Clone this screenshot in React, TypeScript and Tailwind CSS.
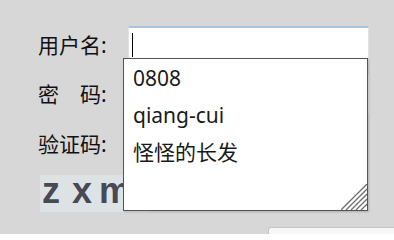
import React from 'react'

const font = {
  fontFamily: '"Noto Sans", "Noto Sans CJK SC", sans-serif',
}

function ResizeGrip() {
  return (
    <svg width="26" height="26" viewBox="0 0 26 26" className="absolute right-0 bottom-0">
      <g stroke="#6f6f6f" strokeWidth="1.3">
        <line x1="26" y1="0" x2="0" y2="26" />
        <line x1="26" y1="5" x2="5" y2="26" />
        <line x1="26" y1="10" x2="10" y2="26" />
        <line x1="26" y1="15" x2="15" y2="26" />
        <line x1="26" y1="20" x2="20" y2="26" />
      </g>
    </svg>
  )
}

export default function App() {
  const suggestions = ['0808', 'qiang-cui', '怪怪的长发']

  return (
    <div
      className="relative w-[394px] h-[234px] overflow-hidden bg-[#d7d7d7] text-[#111]"
      style={font}
    >
      <div className="flex flex-col pl-[38px] pt-[26px]">
        {/* 用户名 */}
        <div className="flex items-center h-[38px]">
          <span className="w-[90px] text-[21px] leading-none">用户名:</span>
          <div className="w-[241px] h-[38px] bg-white border border-[#e2e2e2] border-t-2 border-t-[#a9c4de] flex items-start pt-[5px]">
            <span className="ml-[3px] w-px h-[24px] bg-black" />
          </div>
        </div>

        {/* 密码 */}
        <div className="flex items-center h-[38px] mt-[11px]">
          <span className="w-[90px] text-[21px] leading-none">密　码:</span>
          <div className="w-[241px] h-[38px] bg-white border border-[#e6e6e6]" />
        </div>

        {/* 验证码 */}
        <div className="flex items-center h-[38px] mt-[12px]">
          <span className="w-[90px] text-[21px] leading-none">验证码:</span>
          <div className="w-[200px] h-[38px] bg-white" />
        </div>

        {/* captcha */}
        <div
          className="mt-[12px] ml-[2px] w-[110px] h-[37px] bg-[#dde3e5] flex items-center pl-[2px] text-[36px] font-bold text-[#474a55] leading-none"
          style={{ fontFamily: '"Liberation Sans", Arial, sans-serif' }}
        >
          <span className="w-[30px] pb-[6px]">z</span>
          <span className="w-[27px] pb-[6px]">x</span>
          <span className="pb-[6px]">m</span>
        </div>

        <div className="flex justify-end mt-[15px]">
          <div className="w-[126px] h-[12px] bg-[#f7f7f7] border-t border-l border-[#c4c4c4] rounded-tl-[3px]" />
        </div>
      </div>

      {/* autocomplete dropdown */}
      <div className="absolute left-[123px] top-[58px] w-[245px] h-[153px] bg-white border border-[#555] shadow-[1px_1px_2px_rgba(0,0,0,0.2)]">
        <ul className="pt-[1px] pl-[9px] text-[21px] leading-[37px] text-[#1a1a1a]">
          {suggestions.map(s => (
            <li key={s}>{s}</li>
          ))}
        </ul>
        <ResizeGrip />
      </div>
    </div>
  )
}
